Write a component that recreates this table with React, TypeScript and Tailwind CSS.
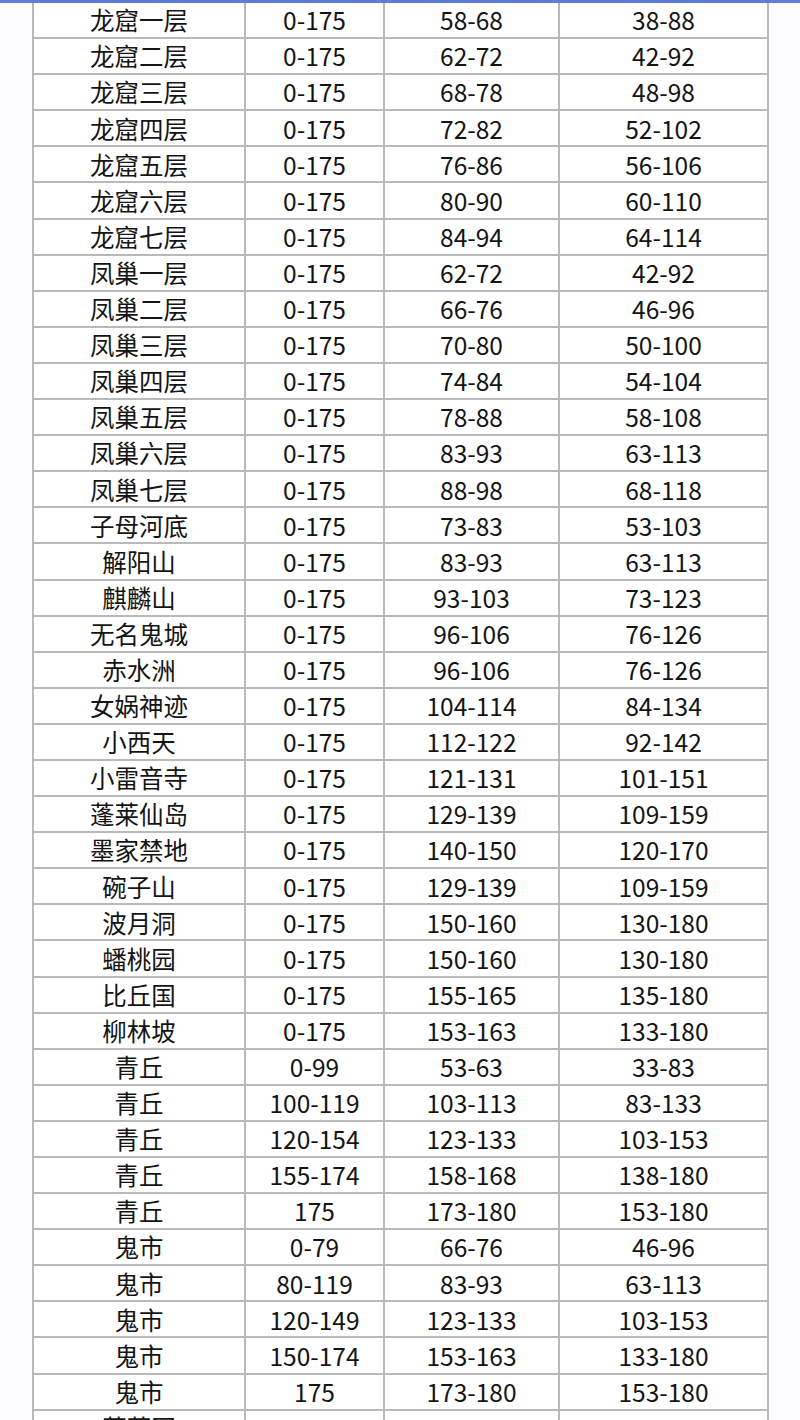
import React from "react";

const rows: [string, string, string, string][] = [
  ["龙窟一层", "0-175", "58-68", "38-88"],
  ["龙窟二层", "0-175", "62-72", "42-92"],
  ["龙窟三层", "0-175", "68-78", "48-98"],
  ["龙窟四层", "0-175", "72-82", "52-102"],
  ["龙窟五层", "0-175", "76-86", "56-106"],
  ["龙窟六层", "0-175", "80-90", "60-110"],
  ["龙窟七层", "0-175", "84-94", "64-114"],
  ["凤巢一层", "0-175", "62-72", "42-92"],
  ["凤巢二层", "0-175", "66-76", "46-96"],
  ["凤巢三层", "0-175", "70-80", "50-100"],
  ["凤巢四层", "0-175", "74-84", "54-104"],
  ["凤巢五层", "0-175", "78-88", "58-108"],
  ["凤巢六层", "0-175", "83-93", "63-113"],
  ["凤巢七层", "0-175", "88-98", "68-118"],
  ["子母河底", "0-175", "73-83", "53-103"],
  ["解阳山", "0-175", "83-93", "63-113"],
  ["麒麟山", "0-175", "93-103", "73-123"],
  ["无名鬼城", "0-175", "96-106", "76-126"],
  ["赤水洲", "0-175", "96-106", "76-126"],
  ["女娲神迹", "0-175", "104-114", "84-134"],
  ["小西天", "0-175", "112-122", "92-142"],
  ["小雷音寺", "0-175", "121-131", "101-151"],
  ["蓬莱仙岛", "0-175", "129-139", "109-159"],
  ["墨家禁地", "0-175", "140-150", "120-170"],
  ["碗子山", "0-175", "129-139", "109-159"],
  ["波月洞", "0-175", "150-160", "130-180"],
  ["蟠桃园", "0-175", "150-160", "130-180"],
  ["比丘国", "0-175", "155-165", "135-180"],
  ["柳林坡", "0-175", "153-163", "133-180"],
  ["青丘", "0-99", "53-63", "33-83"],
  ["青丘", "100-119", "103-113", "83-133"],
  ["青丘", "120-154", "123-133", "103-153"],
  ["青丘", "155-174", "158-168", "138-180"],
  ["青丘", "175", "173-180", "153-180"],
  ["鬼市", "0-79", "66-76", "46-96"],
  ["鬼市", "80-119", "83-93", "63-113"],
  ["鬼市", "120-149", "123-133", "103-153"],
  ["鬼市", "150-174", "153-163", "133-180"],
  ["鬼市", "175", "173-180", "153-180"],
  ["葡萄园", "0-99", "55-65", "35-85"],
];

export default function App() {
  return (
    <div
      className="w-[800px] h-[1420px] overflow-hidden bg-[#fcfcfe] text-[#141414]"
      style={{ fontFamily: '"Noto Sans CJK SC", "Noto Sans", sans-serif' }}
    >
      <div className="h-[3px] bg-[#5f7ed8]" />
      <div className="ml-[32px] w-[737px] bg-[#b9b9b9] px-[2px] grid grid-cols-[210px_137px_173px_207px] auto-rows-[34.1px] gap-[2px]">
        {rows.map((r, i) =>
          r.map((c, j) => (
            <div
              key={`${i}-${j}`}
              className={`bg-white flex items-center justify-center text-[24.5px] leading-none ${
                i === 0 ? "pt-[1px]" : "pt-[1px]"
              }`}
            >
              {c}
            </div>
          ))
        )}
      </div>
    </div>
  );
}
